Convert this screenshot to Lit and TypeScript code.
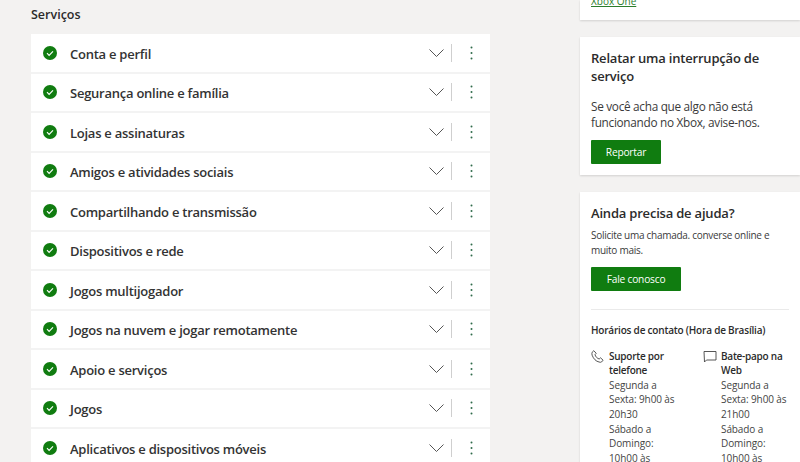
import { LitElement, html, css } from "lit";
import { customElement } from "lit/decorators.js";

const SERVICES = [
  "Conta e perfil",
  "Segurança online e família",
  "Lojas e assinaturas",
  "Amigos e atividades sociais",
  "Compartilhando e transmissão",
  "Dispositivos e rede",
  "Jogos multijogador",
  "Jogos na nuvem e jogar remotamente",
  "Apoio e serviços",
  "Jogos",
  "Aplicativos e dispositivos móveis",
];

@customElement("app-root")
export class AppRoot extends LitElement {
  static styles = css`
    :host {
      display: block;
      height: 462px;
      overflow: hidden;
      background: #f3f2f1;
      font-family: "Open Sans", "Noto Sans", sans-serif;
      color: #2b2b2b;
    }
    .page {
      display: grid;
      grid-template-columns: 459px 220px;
      column-gap: 90px;
      padding-left: 31px;
      height: 462px;
      overflow: hidden;
    }
    .heading {
      font-size: 12.5px;
      font-weight: 600;
      line-height: 18px;
      padding-top: 6px;
      height: 28px;
      box-sizing: border-box;
      margin-bottom: 6px;
    }
    .row {
      display: flex;
      align-items: center;
      height: 39.5px;
      box-sizing: border-box;
      background: #fff;
      border-bottom: 2px solid #f3f3f3;
      padding-left: 12px;
    }
    .check {
      width: 14px;
      height: 14px;
      flex: none;
      margin-right: 13px;
    }
    .name {
      flex: 1;
      font-size: 13px;
      font-weight: 600;
      letter-spacing: -0.25px;
      line-height: 20px;
      padding-top: 1.5px;
      color: #333;
      white-space: nowrap;
    }
    .chev {
      width: 15px;
      height: 10px;
      flex: none;
      margin-right: 7px;
    }
    .sep {
      width: 1px;
      height: 18px;
      background: #cfcfcf;
      flex: none;
      margin-right: 18px;
    }
    .dots {
      width: 3px;
      height: 14px;
      flex: none;
      margin-right: 17px;
    }
    .side {
      display: flex;
      flex-direction: column;
      gap: 17px;
    }
    .card {
      background: #fff;
      box-shadow: 0 1px 2px rgba(0, 0, 0, 0.14);
      padding: 0 11px;
    }
    .card.top {
      height: 20px;
      overflow: hidden;
    }
    .link {
      display: block;
      margin-top: -6px;
      font-size: 10px;
      line-height: 14px;
      color: #2b7d2b;
      text-decoration: underline;
    }
    .report {
      height: 138px;
      box-sizing: border-box;
      padding-top: 12px;
    }
    h2 {
      margin: 0;
      font-size: 13px;
      font-weight: 600;
      letter-spacing: -0.2px;
      line-height: 18px;
      color: #2b2b2b;
    }
    .report p {
      margin: 13px 0 10px;
      font-size: 11.8px;
      letter-spacing: -0.3px;
      line-height: 16px;
      color: #3a3a3a;
    }
    .btn {
      display: flex;
      align-items: center;
      justify-content: center;
      height: 23.5px;
      background: #107c10;
      color: #fff;
      font-size: 10.2px;
      font-weight: 500;
      letter-spacing: -0.2px;
      border-radius: 1px;
    }
    .report .btn {
      width: 70px;
    }
    .help {
      flex: 1;
      padding-top: 12px;
      box-sizing: border-box;
    }
    .help p {
      margin: 6px 0 9px;
      font-size: 10px;
      letter-spacing: -0.28px;
      line-height: 15px;
      color: #3a3a3a;
    }
    .help .btn {
      width: 90px;
    }
    hr {
      border: 0;
      border-top: 1px solid #eaeaea;
      margin: 18px 0 12px;
    }
    .hours {
      font-size: 10px;
      font-weight: 600;
      letter-spacing: -0.2px;
      line-height: 15px;
      white-space: nowrap;
      padding-top: 1px;
    }
    .contacts {
      display: grid;
      grid-template-columns: 112px 96px;
      margin-top: 11px;
    }
    .contact {
      display: flex;
      gap: 4px;
    }
    .contact svg {
      width: 14px;
      height: 14px;
      flex: none;
      margin-top: 1px;
    }
    .contact b {
      display: block;
      font-weight: 600;
      font-size: 10px;
      letter-spacing: -0.25px;
      color: #2b2b2b;
    }
    .text {
      font-size: 10px;
      letter-spacing: -0.1px;
      line-height: 14.65px;
      color: #444;
      width: 68px;
    }
  `;

  private icon() {
    return html`<svg class="check" viewBox="0 0 14 14">
      <circle cx="7" cy="7" r="7" fill="#107c10"></circle>
      <path d="M4 7.200l2.100 2.100L10 5.400" fill="none" stroke="#fff" stroke-width="1.2"></path>
    </svg>`;
  }

  render() {
    return html`<div class="page">
      <main>
        <div class="heading">Serviços</div>
        ${SERVICES.map(
          (s) => html`<div class="row">
            ${this.icon()}
            <span class="name">${s}</span>
            <svg class="chev" viewBox="0 0 15 10">
              <path d="M.5 1.500l7 7 7-7" fill="none" stroke="#555" stroke-width="1"></path>
            </svg>
            <span class="sep"></span>
            <svg class="dots" viewBox="0 0 3 14">
              <circle cx="1.500" cy="1.500" r="1" fill="#2f6b4a"></circle>
              <circle cx="1.500" cy="7" r="1" fill="#2f6b4a"></circle>
              <circle cx="1.500" cy="12.500" r="1" fill="#2f6b4a"></circle>
            </svg>
          </div>`
        )}
      </main>
      <aside class="side">
        <div class="card top"><span class="link">Xbox One</span></div>
        <section class="card report">
          <h2>Relatar uma interrupção de serviço</h2>
          <p>Se você acha que algo não está funcionando no Xbox, avise-nos.</p>
          <div class="btn">Reportar</div>
        </section>
        <section class="card help">
          <h2>Ainda precisa de ajuda?</h2>
          <p>Solicite uma chamada. converse online e muito mais.</p>
          <div class="btn">Fale conosco</div>
          <hr />
          <div class="hours">Horários de contato (Hora de Brasília)</div>
          <div class="contacts">
            <div class="contact">
              <svg viewBox="0 0 14 14">
                <path d="M1.200 2.200l1.600-1.500 2.400 2.600-1.200 1.400c.6 2 2.200 3.700 4.200 4.300l1.300-1.200 2.600 2.400-1.600 1.800c-.5.4-1.400.4-2.400 0C5 11.400 2.600 9 1.100 5.200.8 4 .8 2.900 1.200 2.200z" fill="none" stroke="#444" stroke-width="0.9"></path>
              </svg>
              <div class="text"><b>Suporte por telefone</b>Segunda a Sexta: 9h00 às 20h30<br />Sábado a Domingo: 10h00 às 19h00</div>
            </div>
            <div class="contact">
              <svg viewBox="0 0 14 14">
                <path d="M1 1.500h12v8.500H3.500L1.500 12z" fill="none" stroke="#444" stroke-width="0.9"></path>
              </svg>
              <div class="text"><b>Bate-papo na Web</b>Segunda a Sexta: 9h00 às 21h00<br />Sábado a Domingo: 10h00 às 19h00</div>
            </div>
          </div>
        </section>
      </aside>
    </div>`;
  }
}
